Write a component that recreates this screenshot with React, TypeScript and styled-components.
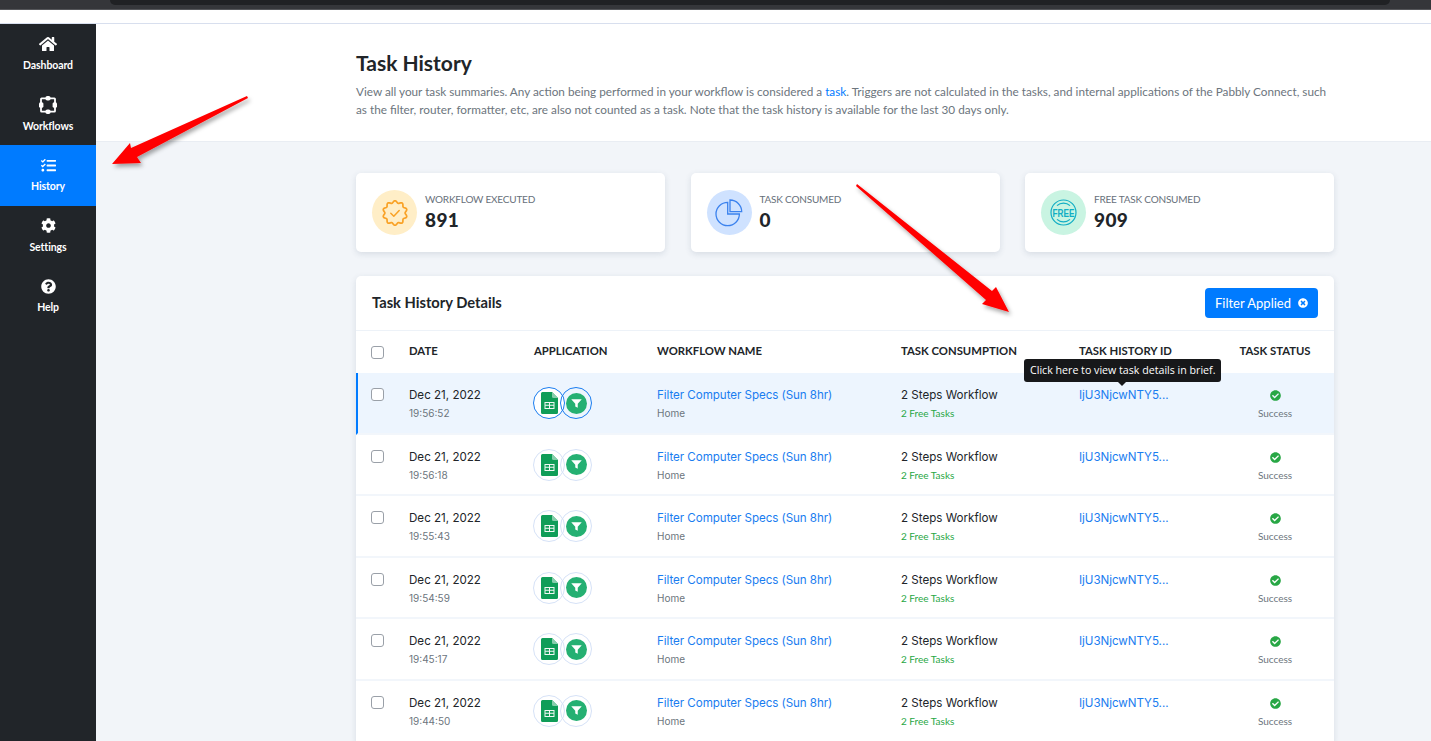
import * as React from 'react'
import styled, { createGlobalStyle } from 'styled-components'
import { FaHome, FaTasks, FaCog, FaQuestionCircle, FaCheckCircle, FaTimesCircle } from 'react-icons/fa'

const GlobalStyle = createGlobalStyle`
  html, body {
    margin: 0;
    padding: 0;
    height: 100%;
    overflow: hidden;
    background: #fff;
    font-family: Lato, "Liberation Sans", sans-serif;
  }
  * {
    box-sizing: border-box;
  }
`

const Page = styled.div`
  position: relative;
  height: 741px;
  overflow: hidden;
  display: flex;
  flex-direction: column;
`

const BrowserStrip = styled.div`
  height: 10px;
  flex: none;
  background: #35363a;
  border-bottom: 1px solid #55565a;
  padding: 0 41px 0 110px;
`

const BrowserBar = styled.div`
  height: 5px;
  background: #202124;
  border-radius: 0 0 6px 6px;
`

const AddressGap = styled.div`
  height: 14px;
  flex: none;
  background: #fff;
  border-bottom: 1px solid #d8dfee;
`

const Body = styled.div`
  flex: 1;
  display: flex;
  min-height: 0;
`

const Sidebar = styled.nav`
  width: 96px;
  flex: none;
  background: #212529;
  display: flex;
  flex-direction: column;
`

const NavItem = styled.a<{ $active?: boolean }>`
  height: 60.5px;
  flex: none;
  display: flex;
  flex-direction: column;
  align-items: center;
  padding-top: 11px;
  gap: 5px;
  color: #fff;
  background: ${(p) => (p.$active ? '#007bff' : 'transparent')};
  font-size: 10.5px;
  font-weight: 700;
  line-height: 14px;
  letter-spacing: -0.1px;
`

const NavIcon = styled.span`
  height: 18px;
  display: flex;
  align-items: center;
  justify-content: center;
  font-size: 16px;
`

const Main = styled.main`
  flex: 1;
  min-width: 0;
  background: #f2f5f9;
  display: flex;
  flex-direction: column;
`

const HeaderBand = styled.header`
  height: 118px;
  flex: none;
  background: #fff;
  border-bottom: 1px solid #e9edf3;
  padding: 24px 97px 0 260px;
`

const Title = styled.h1`
  margin: 0 0 6px;
  font-size: 21px;
  line-height: 29px;
  font-weight: 700;
  color: #212529;
`

const Lead = styled.p`
  margin: 0;
  font-size: 11.75px;
  line-height: 18px;
  color: #6c757d;
`

const Link = styled.a`
  color: #007bff;
`

const Content = styled.div`
  padding: 31px 97px 0 260px;
  display: flex;
  flex-direction: column;
  gap: 24px;
`

const StatRow = styled.div`
  display: flex;
  gap: 25.5px;
`

const StatCard = styled.div`
  width: 309px;
  height: 79px;
  background: #fff;
  border-radius: 5px;
  box-shadow: 0 2px 6px rgba(50, 70, 100, 0.14);
  display: flex;
  align-items: center;
  padding-left: 16px;
  gap: 8px;
`

const StatIcon = styled.div<{ $bg: string }>`
  width: 45px;
  height: 45px;
  border-radius: 50%;
  flex: none;
  background: ${(p) => p.$bg};
  display: flex;
  align-items: center;
  justify-content: center;
`

const StatText = styled.div`
  display: flex;
  flex-direction: column;
`

const StatLabel = styled.span`
  font-size: 10px;
  line-height: 13px;
  padding-bottom: 2px;
  letter-spacing: -0.2px;
  color: #67707a;
`

const StatValue = styled.span`
  font-size: 19px;
  line-height: 24px;
  font-weight: 900;
  color: #212529;
  letter-spacing: 0.4px;
`

const TableCard = styled.section`
  background: #fff;
  border-radius: 5px 5px 0 0;
  box-shadow: 0 2px 6px rgba(50, 70, 100, 0.14);
`

const TableTop = styled.div`
  height: 55px;
  display: flex;
  align-items: center;
  justify-content: space-between;
  padding: 0 16px;
  border-bottom: 1px solid #edf2f8;
`

const TableTitle = styled.h2`
  margin: 0 0 2px;
  font-size: 14.7px;
  font-weight: 700;
  color: #212529;
`

const FilterButton = styled.button`
  height: 30px;
  padding: 0 10px;
  border: 0;
  border-radius: 4px;
  background: #007bff;
  color: #fff;
  font-family: inherit;
  font-size: 13px;
  display: flex;
  align-items: center;
  gap: 7px;
`

const gridColumns = '38px 125px 123px 244px 178px 151px 90px'

const HeadRow = styled.div`
  height: 42px;
  display: grid;
  grid-template-columns: ${gridColumns};
  align-items: center;
  padding-left: 15px;
  font-size: 11.3px;
  font-weight: 700;
  color: #212529;
`

const HeadCell = styled.span<{ $center?: boolean }>`
  padding-bottom: 4px;
  text-align: ${(p) => (p.$center ? 'center' : 'left')};
  white-space: nowrap;
`

const Row = styled.div<{ $active?: boolean }>`
  height: 61.6px;
  display: grid;
  grid-template-columns: ${gridColumns};
  padding-left: ${(p) => (p.$active ? '13px' : '15px')};
  padding-top: 14px;
  background: ${(p) => (p.$active ? '#edf5fe' : '#fff')};
  border-left: ${(p) => (p.$active ? '2px solid #007bff' : '0')};
  border-bottom: 2px solid #f2f6fb;
`

const Check = styled.span`
  width: 13px;
  height: 13px;
  display: block;
  border: 1px solid #9aa0a8;
  border-radius: 3px;
  background: #fff;
`

const RowCheck = styled(Check)`
  margin-top: 1px;
`

const Stack = styled.div`
  display: flex;
  flex-direction: column;
  gap: 3px;
`

const Primary = styled.span`
  font-family: Inter, Roboto, sans-serif;
  font-size: 11.6px;
  line-height: 16px;
  color: #212529;
  white-space: nowrap;
`

const Secondary = styled.span`
  font-family: Inter, Roboto, sans-serif;
  font-size: 10px;
  line-height: 14px;
  color: #6c757d;
`

const PrimaryLink = styled(Primary)`
  color: #1a7df0;
  letter-spacing: -0.05px;
`

const FreeTasks = styled(Secondary)`
  font-family: Lato, sans-serif;
  color: #28a745;
`

const SuccessText = styled(Secondary)`
  font-family: Lato, sans-serif;
`

const AppIcons = styled.div`
  display: flex;
  margin-left: -1px;
`

const AppCircle = styled.span<{ $active?: boolean }>`
  width: 32px;
  height: 32px;
  border-radius: 50%;
  flex: none;
  background: #fff;
  border: 1px solid ${(p) => (p.$active ? '#1a7df0' : '#d6e2f7')};
  display: flex;
  align-items: center;
  justify-content: center;
  & + & {
    margin-left: -5px;
    background: transparent;
  }
`

const StatusCell = styled.div`
  display: flex;
  flex-direction: column;
  align-items: center;
  gap: 5px;
  padding-top: 3px;
  color: #28a745;
  font-size: 12px;
`

const Tooltip = styled.div`
  position: absolute;
  left: 1024px;
  top: 359px;
  height: 23px;
  padding: 0 6px;
  background: #17181a;
  color: #fff;
  border-radius: 3px;
  font-family: "Open Sans", sans-serif;
  font-size: 10.65px;
  line-height: 23px;
  white-space: nowrap;
  &::after {
    content: '';
    position: absolute;
    left: 94px;
    top: 23px;
    border: 4px solid transparent;
    border-top-color: #17181a;
    border-bottom: 0;
  }
`

const ArrowLayer = styled.svg`
  position: absolute;
  left: 0;
  top: 0;
  pointer-events: none;
`

const WorkflowsGlyph = () => (
  <svg width="18" height="18" viewBox="0 0 18 18" fill="none">
    <rect x="2" y="2.4" width="14" height="13.2" rx="0.6" stroke="#fff" strokeWidth="1.8" />
    <rect x="6.4" y="0" width="5.2" height="4.6" rx="2" fill="#fff" />
    <rect x="6.4" y="13.4" width="5.2" height="4.6" rx="2" fill="#fff" />
    <rect x="0" y="6.2" width="4.4" height="5.6" rx="1.6" fill="#fff" />
    <rect x="13.6" y="6.2" width="4.4" height="5.6" rx="1.6" fill="#fff" />
  </svg>
)

const SheetsGlyph = () => (
  <svg width="17" height="22" viewBox="0 0 17 22">
    <path d="M1.5 0H11l6 6v14.5a1.5 1.5 0 0 1-1.5 1.5h-14A1.5 1.5 0 0 1 0 20.5v-19A1.5 1.5 0 0 1 1.5 0z" fill="#0f9d58" />
    <path d="M11 0l6 6h-4.5A1.5 1.5 0 0 1 11 4.5z" fill="#87ceac" />
    <path d="M3.5 10h10v7h-10z M4.5 11v1.8h3.5V11z M9 11v1.8h3.5V11z M4.5 13.8v2.2h3.5v-2.2z M9 13.8v2.2h3.5v-2.2z" fill="#f1f8f4" fillRule="evenodd" />
  </svg>
)

const FilterGlyph = () => (
  <svg width="21" height="21" viewBox="0 0 22 22">
    <circle cx="11" cy="11" r="11" fill="#25b072" />
    <path d="M5.5 6.5h11l-4.2 4.8v4.2l-2.6-1.4v-2.8z" fill="#fff" />
  </svg>
)

// scalloped seal outline, ten lobes
const sealPath = (() => {
  const pts: string[] = []
  for (let i = 0; i < 100; i++) {
    const a = (i / 100) * Math.PI * 2
    const r = 11.2 + 1.1 * Math.cos(a * 10)
    pts.push(`${(13 + r * Math.sin(a)).toFixed(2)} ${(13 - r * Math.cos(a)).toFixed(2)}`)
  }
  return `M${pts.join('L')}Z`
})()

const SealGlyph = () => (
  <svg width="26" height="26" viewBox="0 0 26 26" fill="none" stroke="#f9a226" strokeLinecap="round" strokeLinejoin="round">
    <path d={sealPath} strokeWidth="1.7" />
    <path d="M8.8 13.2l3 3 5.4-5.6" strokeWidth="1.5" />
  </svg>
)

const PieGlyph = () => (
  <svg width="28" height="28" viewBox="0 0 28 28" fill="none" stroke="#3b82ee" strokeWidth="1.3">
    <path d="M12.7 3.3A11.7 11.7 0 1 0 24.4 15H12.7z" />
    <path d="M15 1v11.7h11.7A11.7 11.7 0 0 0 15 1z" />
  </svg>
)

const FreeGlyph = () => (
  <svg width="27" height="27" viewBox="0 0 27 27" fill="none" stroke="#12aec4">
    <circle cx="13.5" cy="13.5" r="12.5" strokeWidth="1.2" />
    <path d="M7 6.6a9.5 9.5 0 0 1 13 0M7 20.4a9.5 9.5 0 0 0 13 0" strokeWidth="1.2" />
    <text x="13.5" y="17.8" textAnchor="middle" fill="#12aec4" stroke="none" fontFamily="'Liberation Sans', sans-serif" fontSize="11.5" fontWeight="700" textLength="22" lengthAdjust="spacingAndGlyphs">FREE</text>
  </svg>
)

const navItems = [
  { label: 'Dashboard', icon: <FaHome size={18} /> },
  { label: 'Workflows', icon: <WorkflowsGlyph /> },
  { label: 'History', icon: <FaTasks size={15} />, active: true },
  { label: 'Settings', icon: <FaCog size={15} /> },
  { label: 'Help', icon: <FaQuestionCircle size={15} /> },
]

const rows = [
  { time: '19:56:52', active: true },
  { time: '19:56:18' },
  { time: '19:55:43' },
  { time: '19:54:59' },
  { time: '19:45:17' },
  { time: '19:44:50' },
]

const App: React.FC = () => {
  return (
    <Page>
      <GlobalStyle />
      <BrowserStrip>
        <BrowserBar />
      </BrowserStrip>
      <AddressGap />
      <Body>
        <Sidebar>
          {navItems.map((item) => (
            <NavItem key={item.label} $active={item.active}>
              <NavIcon>{item.icon}</NavIcon>
              {item.label}
            </NavItem>
          ))}
        </Sidebar>
        <Main>
          <HeaderBand>
            <Title>Task History</Title>
            <Lead>
              View all your task summaries. Any action being performed in your workflow is considered a <Link>task</Link>. Triggers are not calculated in the tasks, and internal applications of the Pabbly Connect, such as the filter, router, formatter, etc, are also not counted as a task. Note that the task history is available for the last 30 days only.
            </Lead>
          </HeaderBand>
          <Content>
            <StatRow>
              <StatCard>
                <StatIcon $bg="#ffeec7">
                  <SealGlyph />
                </StatIcon>
                <StatText>
                  <StatLabel>WORKFLOW EXECUTED</StatLabel>
                  <StatValue>891</StatValue>
                </StatText>
              </StatCard>
              <StatCard>
                <StatIcon $bg="#cfe2ff">
                  <PieGlyph />
                </StatIcon>
                <StatText>
                  <StatLabel>TASK CONSUMED</StatLabel>
                  <StatValue>0</StatValue>
                </StatText>
              </StatCard>
              <StatCard>
                <StatIcon $bg="#c9f4e2">
                  <FreeGlyph />
                </StatIcon>
                <StatText>
                  <StatLabel>FREE TASK CONSUMED</StatLabel>
                  <StatValue>909</StatValue>
                </StatText>
              </StatCard>
            </StatRow>
            <TableCard>
              <TableTop>
                <TableTitle>Task History Details</TableTitle>
                <FilterButton>
                  Filter Applied
                  <FaTimesCircle size={10} />
                </FilterButton>
              </TableTop>
              <HeadRow>
                <Check />
                <HeadCell>DATE</HeadCell>
                <HeadCell>APPLICATION</HeadCell>
                <HeadCell>WORKFLOW NAME</HeadCell>
                <HeadCell>TASK CONSUMPTION</HeadCell>
                <HeadCell>TASK HISTORY ID</HeadCell>
                <HeadCell $center>TASK STATUS</HeadCell>
              </HeadRow>
              {rows.map((row) => (
                <Row key={row.time} $active={row.active}>
                  <RowCheck />
                  <Stack>
                    <Primary>Dec 21, 2022</Primary>
                    <Secondary>{row.time}</Secondary>
                  </Stack>
                  <AppIcons>
                    <AppCircle $active={row.active}>
                      <SheetsGlyph />
                    </AppCircle>
                    <AppCircle $active={row.active}>
                      <FilterGlyph />
                    </AppCircle>
                  </AppIcons>
                  <Stack>
                    <PrimaryLink>Filter Computer Specs (Sun 8hr)</PrimaryLink>
                    <Secondary>Home</Secondary>
                  </Stack>
                  <Stack>
                    <Primary>2 Steps Workflow</Primary>
                    <FreeTasks>2 Free Tasks</FreeTasks>
                  </Stack>
                  <PrimaryLink>IjU3NjcwNTY5...</PrimaryLink>
                  <StatusCell>
                    <FaCheckCircle size={11} />
                    <SuccessText>Success</SuccessText>
                  </StatusCell>
                </Row>
              ))}
            </TableCard>
          </Content>
        </Main>
      </Body>
      <Tooltip>Click here to view task details in brief.</Tooltip>
      <ArrowLayer width="1431" height="741" viewBox="0 0 1431 741">
        <defs>
          <filter id="arrowShadow" x="-20%" y="-20%" width="140%" height="140%">
            <feDropShadow dx="2" dy="3" stdDeviation="2" floodColor="#000" floodOpacity="0.35" />
          </filter>
        </defs>
        <polygon points="112,164 130,143 131,148 247,96 248,98 137,157 141,163" fill="#ff0000" filter="url(#arrowShadow)" />
        <polygon points="857,184 992,291 996,287 1009,312 982,304 986,300 856,186" fill="#ff0000" filter="url(#arrowShadow)" />
      </ArrowLayer>
    </Page>
  )
}

export default App
